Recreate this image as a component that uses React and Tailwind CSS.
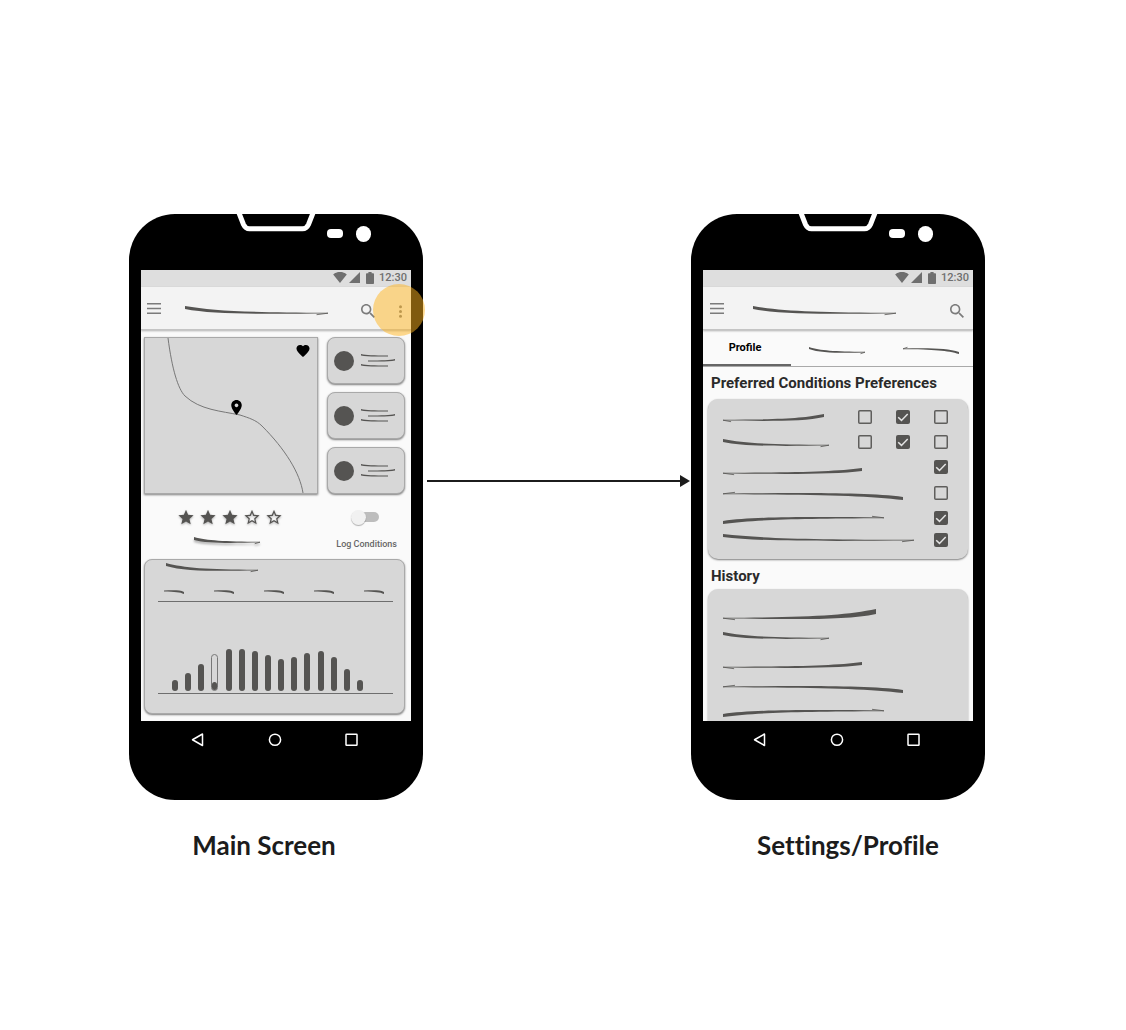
import React from "react";

const INK = "text-[#555452]";

// Tapered pen stroke standing in for a line of text: thick at one end, hooked at the other.
function Scribble({ w, h, t = 3, flipX, flipY, className = "" }) {
  const small = w < 40;
  const e = h - (small ? 1 : 1.8);
  const k = Math.min(w * 0.08, 12);
  const body = `M0 0 C${w * 0.2} ${e * 0.7} ${w * 0.45} ${e - 0.7} ${w} ${e - 0.4} L${w} ${e + 0.4} C${w * 0.55} ${e + 0.8} ${w * 0.2} ${e + t * 0.5} 0 ${t} Z`;
  const hook = `M${w} ${e} L${w - k} ${h - 0.3}`;
  return (
    <svg width={w} height={h} viewBox={`0 0 ${w} ${h}`} className={`shrink-0 overflow-visible ${className}`} aria-hidden="true">
      <g transform={`translate(${flipX ? w : 0} ${flipY ? h : 0}) scale(${flipX ? -1 : 1} ${flipY ? -1 : 1})`}>
        <path d={body} fill="currentColor" />
        {!small && <path d={hook} stroke="currentColor" strokeWidth="0.8" />}
      </g>
    </svg>
  );
}

function StatusBar() {
  return (
    <div className="flex h-[17px] shrink-0 items-center justify-end bg-[#dedede] pr-1 pb-0.5 text-[#6f6f6f]">
      <svg className="mr-0.5 h-[11px] w-[14px]" viewBox="0 3 24 18.5" fill="currentColor" preserveAspectRatio="none">
        <path d="M12.01 21.49L23.64 7c-.45-.34-4.93-4-11.64-4C5.28 3 .81 6.66.36 7l11.63 14.49.01.01.01-.01z" />
      </svg>
      <svg className="mr-1.5 h-[11px] w-[11px]" viewBox="2 2 20 20" fill="currentColor">
        <path d="M2 22h20V2z" />
      </svg>
      <svg className="mr-[5px] h-3 w-2" viewBox="7 2 10 20" fill="currentColor" preserveAspectRatio="none">
        <path d="M15.67 4H14V2h-4v2H8.33C7.6 4 7 4.6 7 5.33v15.33C7 21.4 7.6 22 8.33 22h7.33c.74 0 1.34-.6 1.34-1.33V5.33C17 4.6 16.4 4 15.67 4z" />
      </svg>
      <span className="text-[11px] font-medium leading-none">12:30</span>
    </div>
  );
}

function MenuButton() {
  return (
    <button type="button" aria-label="Menu" className="text-[#7b7b7b]">
      <svg width="14" height="11" viewBox="0 0 14 11" fill="currentColor">
        <path d="M0 0h14v1.6H0zM0 4.7h14v1.6H0zM0 9.4h14V11H0z" />
      </svg>
    </button>
  );
}

function SearchButton() {
  return (
    <button type="button" aria-label="Search" className="mt-1.5 text-[#7b7b7b]">
      <svg width="14" height="14" viewBox="3 3 17.5 17.5" fill="currentColor">
        <path d="M15.5 14h-.79l-.28-.27C15.41 12.59 16 11.11 16 9.5 16 5.91 13.09 3 9.5 3S3 5.91 3 9.5 5.91 16 9.5 16c1.61 0 3.09-.59 4.23-1.57l.27.28v.79l5 4.99L20.49 19l-4.99-5zm-6 0C7.01 14 5 11.99 5 9.5S7.01 5 9.5 5 14 7.01 14 9.5 11.99 14 9.5 14z" />
      </svg>
    </button>
  );
}

function Phone({ children }) {
  return (
    <div className="relative w-[294px] rounded-[46px] bg-black px-3 pt-14">
      <svg className="absolute top-0 left-[106px]" width="82" height="18" viewBox="0 0 82 18" aria-hidden="true">
        <path d="M4 -1 L8.5 10.5 Q10.5 14.8 14.5 14.8 H67.5 Q71.5 14.8 73.5 10.5 L78 -1" fill="none" stroke="#fff" strokeWidth="5" />
      </svg>
      <div className="absolute top-[15px] left-[198px] h-[9px] w-4 rounded-[4px] bg-white" />
      <div className="absolute top-3 left-[227px] h-4 w-[15px] rounded-full bg-white" />
      <div className="h-[451px] bg-[#fafafa]">{children}</div>
      <nav className="flex h-[79px] items-start justify-between pt-3 pr-[53px] pl-[50px]">
        <button type="button" aria-label="Back">
          <svg width="13" height="14" viewBox="0 0 13 14" fill="none" stroke="#fff" strokeWidth="1.5"><path d="M11.5 1v11.5L1.5 6.75z" strokeLinejoin="round" /></svg>
        </button>
        <button type="button" aria-label="Home">
          <svg width="14" height="14" viewBox="0 0 14 14" fill="none" stroke="#fff" strokeWidth="1.5"><circle cx="7" cy="6.75" r="5.6" /></svg>
        </button>
        <button type="button" aria-label="Recent apps">
          <svg width="13" height="14" viewBox="0 0 13 14" fill="none" stroke="#fff" strokeWidth="1.5"><rect x="1" y="1.25" width="11" height="11" rx=".6" /></svg>
        </button>
      </nav>
    </div>
  );
}

const CARD = "rounded-lg border border-[#a9a9a9] bg-[#d7d7d7] shadow-[0_1px_2px_rgba(0,0,0,0.5)]";

function PlaceMap() {
  return (
    <div className="relative flex-1 border border-[#a9a9a9] bg-[#d7d7d7] shadow-[0_1px_2px_rgba(0,0,0,0.5)]">
      <svg className="h-full w-full" viewBox="0 0 172 155" preserveAspectRatio="none" fill="none" stroke="#777" strokeWidth="1">
        <path d="M23 0 C27 31 33 51 40 58 C55 72 76 73 95 77 C104 80 111 82 117 88 C140 111 155 135 158 155" />
      </svg>
      <svg className="absolute top-[7px] right-[7px]" width="14" height="12" viewBox="2 3 20 18.35" fill="#000">
        <path d="M12 21.35l-1.45-1.32C5.4 15.36 2 12.28 2 8.5 2 5.42 4.42 3 7.5 3c1.74 0 3.41.81 4.5 2.09C13.09 3.81 14.76 3 16.5 3 19.58 3 22 5.42 22 8.5c0 3.78-3.4 6.86-8.55 11.54L12 21.35z" />
      </svg>
      <svg className="absolute top-[62px] left-[86px]" width="11" height="15" viewBox="5 2 14 20" fill="#000">
        <path d="M12 2C8.13 2 5 5.13 5 9c0 5.25 7 13 7 13s7-7.75 7-13c0-3.87-3.13-7-7-7zm0 9.5c-1.38 0-2.5-1.12-2.5-2.5s1.12-2.5 2.5-2.5 2.5 1.12 2.5 2.5-1.12 2.5-2.5 2.5z" />
      </svg>
    </div>
  );
}

function SideCard() {
  return (
    <div className={`flex h-[47px] items-center gap-[7px] pl-1.5 ${CARD} ${INK}`}>
      <div className="h-5 w-5 rounded-full bg-[#555452]" />
      <div className="flex flex-col gap-0.5">
        <Scribble w={27} h={3} t={1.5} />
        <Scribble w={27} h={3} t={1.5} flipX className="ml-[7px]" />
        <Scribble w={27} h={3} t={1.5} />
      </div>
    </div>
  );
}

const STAR = "M12 17.27L18.18 21l-1.64-7.03L22 9.24l-7.19-.61L12 2 9.19 8.63 2 9.24l5.46 4.73L5.82 21z";
const STAR_BORDER = "M22 9.24l-7.19-.62L12 2 9.19 8.63 2 9.24l5.46 4.73L5.82 21 12 17.27 18.18 21l-1.63-7.03L22 9.24zM12 15.4l-3.76 2.27 1-4.28-3.32-2.88 4.38-.38L12 6.1l1.71 4.04 4.38.38-3.32 2.88 1 4.28L12 15.4z";

const BARS = [11, 18, 27, 37, 42, 42, 40, 36, 32, 34, 38, 40, 34, 22, 11];

function MainScreen() {
  return (
    <Phone>
      <StatusBar />
      <header className="relative flex h-[43px] items-center border-b border-[#c4c4c4] bg-[#f3f3f3] pl-1.5 shadow-[0_1px_2px_rgba(0,0,0,0.3)]">
        <MenuButton />
        <Scribble w={143} h={9} className={`mt-1 mr-[33px] ml-6 ${INK}`} />
        <SearchButton />
        <button type="button" aria-label="More options" className="relative mt-1.5 ml-6 text-[#7b7b7b]">
          <svg width="3" height="13" viewBox="0 0 3 13" fill="currentColor">
            <circle cx="1.5" cy="1.8" r="1.5" /><circle cx="1.5" cy="6.5" r="1.5" /><circle cx="1.5" cy="11.2" r="1.5" />
          </svg>
          <span className="absolute -top-[21px] -left-[26px] z-10 h-[52px] w-[52px] rounded-full bg-[#ffb41e]/50" />
        </button>
      </header>
      <main className="pt-[7px] pr-[6px] pl-[3px]">
        <div className="flex gap-[9px]">
          <PlaceMap />
          <div className="flex w-[78px] flex-col gap-2">
            <SideCard />
            <SideCard />
            <SideCard />
          </div>
        </div>
        <div className={`flex justify-between pt-[15px] pr-2 pl-[34px] ${INK}`}>
          <div>
            <div className="flex gap-1.5" role="img" aria-label="3 of 5 stars">
              {[1, 2, 3, 4, 5].map((n) => (
                <svg key={n} width="16" height="16" viewBox="1.5 1 21 21" fill="currentColor" className="drop-shadow-[0_1px_1px_rgba(0,0,0,0.3)]">
                  <path d={n <= 3 ? STAR : STAR_BORDER} />
                </svg>
              ))}
            </div>
            <Scribble w={66} h={7} t={3} className="mt-3 ml-4 drop-shadow-[0_2px_1px_rgba(0,0,0,0.3)]" />
          </div>
          <label className="flex flex-col items-center text-[9px] font-medium leading-3 text-[#666]">
            <input
              type="checkbox"
              role="switch"
              className="relative mt-[3px] mr-0.5 mb-4 h-2.5 w-[26px] appearance-none rounded-full bg-[#bdbdbd] before:absolute before:-top-0.5 before:-left-0.5 before:h-[15px] before:w-[15px] before:rounded-full before:bg-[#f1f1f1] before:shadow-[0_1px_1px_rgba(0,0,0,0.3)] checked:before:left-[13px]"
            />
            Log Conditions
          </label>
        </div>
        <div className={`mt-[9px] h-[155px] pt-[3px] pr-[11px] pl-[13px] ${CARD} ${INK}`}>
          <Scribble w={92} h={9} t={3} className="ml-2" />
          <div className="mt-[18px] flex justify-between border-b border-[#6e6e6e] pr-[9px] pb-[7px] pl-1.5">
            {[0, 1, 2, 3, 4].map((n) => (
              <Scribble key={n} w={20} h={4} t={2} flipX flipY />
            ))}
          </div>
          <div className="flex h-[92px] items-end justify-between border-b border-[#6e6e6e] pr-[30px] pb-0.5 pl-[14px]">
            {BARS.map((height, i) =>
              i === 3 ? (
                <div key={i} className="flex w-[7px] items-end rounded-full border border-[#777]" style={{ height }}>
                  <div className="h-2 w-full rounded-full bg-[#555452]" />
                </div>
              ) : (
                <div key={i} className="w-1.5 rounded-full bg-[#555452]" style={{ height }} />
              )
            )}
          </div>
        </div>
      </main>
    </Phone>
  );
}

function Tick({ label, on }) {
  return (
    <span className="relative block h-[14px] w-[14px]">
      <input type="checkbox" aria-label={label} defaultChecked={on} className="peer block h-[14px] w-[14px] appearance-none rounded-[2px] checked:bg-[#555452]" />
      <svg className="pointer-events-none absolute inset-0 peer-checked:hidden" width="14" height="14" viewBox="0 0 14 14" fill="none" stroke="#5f5e5c" strokeWidth="1.5">
        <rect x=".75" y=".75" width="12.5" height="12.5" rx="1" />
      </svg>
      <svg className="pointer-events-none absolute inset-0 hidden peer-checked:block" width="14" height="14" viewBox="0 0 14 14" fill="none" stroke="#e4e4e4" strokeWidth="1.5">
        <path d="M2.2 7.2l3.3 3.2 6.2-6.4" />
      </svg>
    </span>
  );
}

const PREFS = [
  { row: "h-[25px]", line: <Scribble w={101} h={8} flipX className="mt-0.5" />, boxes: [false, true, false] },
  { row: "h-[25px]", line: <Scribble w={106} h={8} className="mt-0.5" />, boxes: [false, true, false] },
  { row: "h-[26px]", line: <Scribble w={139} h={7} flipX className="mt-2" />, boxes: [true] },
  { row: "h-[25px]", line: <Scribble w={180} h={8} flipX flipY className="mt-1.5" />, boxes: [false] },
  { row: "h-[25px]", line: <Scribble w={161} h={8} flipY className="mt-1" />, boxes: [true] },
  { row: "h-5", line: <Scribble w={191} h={8} className="mb-1" />, boxes: [true] },
];

function ProfileScreen() {
  return (
    <Phone>
      <div className="flex h-full flex-col overflow-hidden">
        <StatusBar />
        <header className="relative flex h-[43px] shrink-0 items-center border-b border-[#c4c4c4] bg-[#f3f3f3] pr-[9px] pl-[7px] shadow-[0_1px_2px_rgba(0,0,0,0.3)]">
          <MenuButton />
          <Scribble w={143} h={9} className={`mt-1 mr-auto ml-[29px] ${INK}`} />
          <SearchButton />
        </header>
        <div className={`grid h-[37px] shrink-0 grid-cols-[88px_1fr_1fr] border-b border-[#a9a9a9] ${INK}`} role="tablist">
          <button type="button" role="tab" aria-selected="true" className="border-b-2 border-[#666] pt-0.5 pr-1 text-[11px] font-bold leading-4 text-black">
            Profile
          </button>
          <button type="button" role="tab" aria-label="Second tab" aria-selected="false" className="flex items-center justify-center pt-1">
            <Scribble w={56} h={7} t={2} />
          </button>
          <button type="button" role="tab" aria-label="Third tab" aria-selected="false" className="flex items-center justify-end pt-1 pr-[14px]">
            <Scribble w={56} h={7} t={2} flipX flipY />
          </button>
        </div>
        <main className={`px-[5px] pt-1.5 ${INK}`}>
          <h2 className="pl-[3px] text-[15px] font-bold leading-5 text-[#2a2a2a]">Preferred Conditions Preferences</h2>
          <div className="mt-1.5 rounded-[10px] bg-[#d7d7d7] pt-[5px] pr-5 pb-[9px] pl-[15px] shadow-[0_1px_2px_rgba(0,0,0,0.5)]">
            {PREFS.map((p, i) => (
              <div key={i} className={`flex items-center justify-between ${p.row}`}>
                {p.line}
                <div className="flex gap-6">
                  {p.boxes.map((on, j) => (
                    <Tick key={j} label={`Preference ${i + 1}, option ${j + 1}`} on={on} />
                  ))}
                </div>
              </div>
            ))}
          </div>
          <h2 className="mt-[7px] pl-[3px] text-[15px] font-bold leading-5 text-[#2a2a2a]">History</h2>
          <div className="mt-[3px] flex h-[154px] flex-col rounded-[10px] bg-[#d7d7d7] pt-5 pl-[15px] shadow-[0_1px_2px_rgba(0,0,0,0.4)]">
            <Scribble w={153} h={11} t={5} flipX />
            <Scribble w={106} h={8} className="mt-3" />
            <Scribble w={139} h={7} flipX className="mt-[22px]" />
            <Scribble w={180} h={8} flipX flipY className="mt-4" />
            <Scribble w={161} h={8} flipY className="mt-4" />
          </div>
        </main>
      </div>
    </Phone>
  );
}

const CAPTION = "mt-[31px] text-center text-[26px] font-bold leading-7 text-[#1c1c1c] font-['Lato',sans-serif] [font-variant-ligatures:none]";

export default function App() {
  return (
    <div className="flex min-h-screen items-start justify-center bg-white pt-[214px] pr-3 font-['Roboto',sans-serif]">
      <figure className="shrink-0">
        <MainScreen />
        <figcaption className={`pr-6 ${CAPTION}`}>Main Screen</figcaption>
      </figure>
      <div className="mt-[261px] flex w-[268px] items-center pr-px pl-1" aria-hidden="true">
        <div className="h-0.5 flex-1 bg-[#1c1c1c]" />
        <svg width="10" height="12" viewBox="0 0 10 12" fill="#1c1c1c">
          <path d="M0 0l10 6L0 12z" />
        </svg>
      </div>
      <figure className="shrink-0">
        <ProfileScreen />
        <figcaption className={`pl-5 ${CAPTION}`}>Settings/Profile</figcaption>
      </figure>
    </div>
  );
}
